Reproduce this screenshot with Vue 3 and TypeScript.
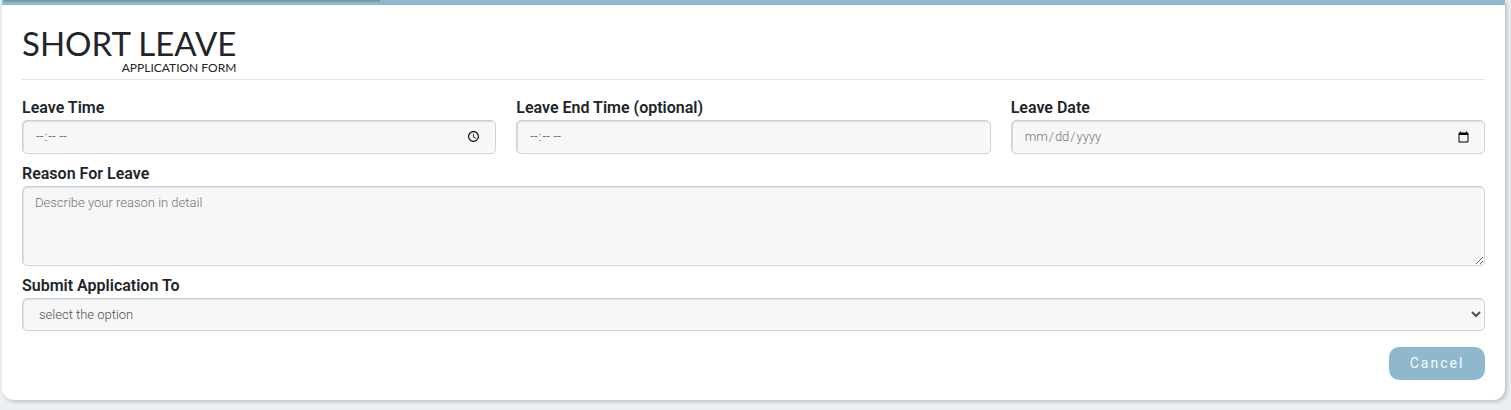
<script setup lang="ts">
import { ref } from 'vue'

const leaveTime = ref('')
const leaveEndTime = ref('')
const leaveDate = ref('')
const reason = ref('')
const recipient = ref('')

function cancel(): void {
  leaveTime.value = ''
  leaveEndTime.value = ''
  leaveDate.value = ''
  reason.value = ''
  recipient.value = ''
}
</script>

<template>
  <main class="card">
    <div class="bar"><div class="bar-shade"></div></div>
    <form class="form" @submit.prevent>
      <header class="heading">
        <h1 class="title">SHORT LEAVE <small class="subtitle">APPLICATION FORM</small></h1>
      </header>
      <div class="row">
        <div class="group">
          <label for="leave-time">Leave Time</label>
          <input id="leave-time" v-model="leaveTime" class="field time" type="time" />
        </div>
        <div class="group">
          <label for="leave-end">Leave End Time (optional)</label>
          <input id="leave-end" v-model="leaveEndTime" class="field time no-picker" type="time" />
        </div>
        <div class="group">
          <label for="leave-date">Leave Date</label>
          <input id="leave-date" v-model="leaveDate" class="field" type="date" />
        </div>
      </div>
      <div class="group">
        <label for="reason">Reason For Leave</label>
        <textarea id="reason" v-model="reason" class="field area" placeholder="Describe your reason in detail"></textarea>
      </div>
      <div class="group">
        <label for="recipient">Submit Application To</label>
        <select id="recipient" v-model="recipient" class="field select">
          <option value="">select the option</option>
        </select>
      </div>
      <div class="actions">
        <button type="button" class="cancel" @click="cancel">Cancel</button>
      </div>
    </form>
  </main>
</template>

<style>
body {
  background: #ecf0f4;
}
</style>

<style scoped>
.card {
  box-sizing: border-box;
  margin: 0 6px 10px 2px;
  background: #fff;
  border-radius: 0 0 12px 12px;
  box-shadow: 2px 2px 4px rgba(0, 0, 0, 0.2);
  font-family: Roboto, "Liberation Sans", sans-serif;
  color: #212529;
}
.bar {
  height: 5px;
  background: #90b8cd;
}
.bar-shade {
  width: 25%;
  height: 3px;
  margin-left: 2px;
  background: linear-gradient(#6c8d9f, #90b8cd);
}
.form {
  display: flex;
  flex-direction: column;
  gap: 8px;
  padding: 20px;
}
.heading {
  display: flex;
  margin-bottom: 8px;
  padding-bottom: 5px;
  border-bottom: 1px solid #e2e3e4;
}
.title {
  display: flex;
  flex-direction: column;
  margin: 0;
  font: 400 33px/37px Lato, "Open Sans", sans-serif;
}
.subtitle {
  font-size: 12px;
  line-height: 12px;
  text-align: right;
}
.row {
  display: grid;
  grid-template-columns: repeat(3, 1fr);
  gap: 20px;
}
.group {
  display: flex;
  flex-direction: column;
  min-width: 0;
}
label {
  font-size: 16px;
  font-weight: 600;
  line-height: 24px;
}
.field {
  box-sizing: border-box;
  width: 100%;
  height: 34px;
  margin: 0;
  padding: 6px 12px;
  border: 1px solid #ced0d3;
  border-radius: 5px;
  background: #f7f7f7;
  box-shadow: inset 1px 1px 1px #cfdfea, inset -2px -2px 2px #fbfbfb;
  color: #6c757d;
  font: 300 13px/20px Roboto, sans-serif;
}
.field::placeholder {
  color: #6c757d;
}
.time {
  color: #343a40;
}
.no-picker::-webkit-calendar-picker-indicator {
  display: none;
}
.area {
  display: block;
  height: 80px;
  resize: vertical;
}
.select {
  height: 33px;
  color: #495057;
}
.actions {
  display: flex;
  justify-content: flex-end;
  margin-top: 8px;
}
.cancel {
  min-width: 96px;
  height: 33px;
  padding: 0 20px 2px;
  border: 0;
  border-radius: 10px;
  background: #90b8cd;
  color: #f7fafc;
  font: 400 14px/20px Roboto, sans-serif;
  letter-spacing: 2px;
}
</style>
